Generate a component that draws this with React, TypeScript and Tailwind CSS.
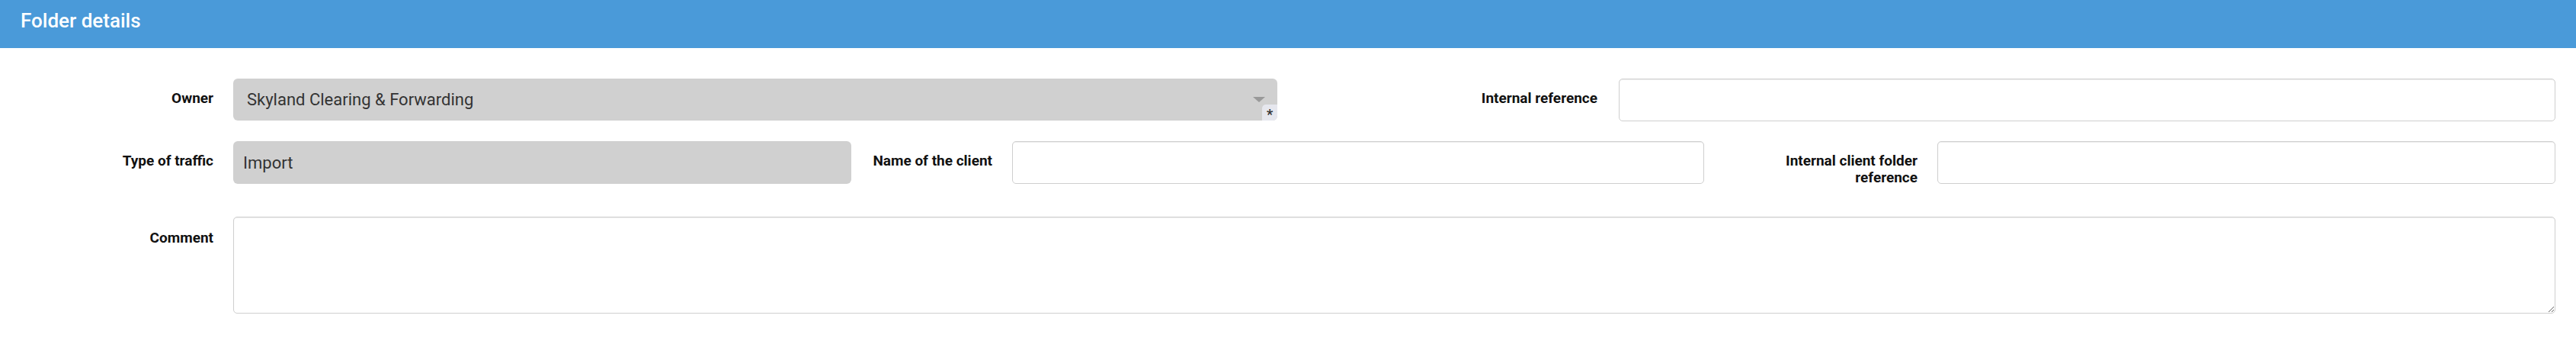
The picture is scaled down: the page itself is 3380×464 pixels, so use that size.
import { useState } from 'react';

const labelCls = 'shrink-0 pt-[15px] text-right text-[19px] font-bold leading-[22px] text-[#111]';
const inputCls =
  'h-[56px] rounded-[5px] border border-[#cfcfcf] bg-white px-4 text-[20px] text-[#333] shadow-[inset_0_1px_1px_rgba(0,0,0,0.075)] outline-none';

function Field({ value, onChange, className }: { value: string; onChange: (v: string) => void; className: string }) {
  return <input value={value} onChange={(e) => onChange(e.target.value)} className={`${inputCls} ${className}`} />;
}

export default function App() {
  const [form, setForm] = useState({
    internalRef: '',
    clientName: '',
    clientFolderRef: '',
    comment: '',
  });

  const set = (key: keyof typeof form) => (v: string) => setForm((f) => ({ ...f, [key]: v }));

  return (
    <div className="min-h-[464px] bg-white font-['Roboto',sans-serif]">
      {/* Header */}
      <div className="flex h-[63px] items-center bg-[#4a9ad9] px-[27px] pb-[8px]">
        <h2 className="text-[26px] font-medium text-white">Folder details</h2>
      </div>

      <div className="flex flex-col pr-[27px] pt-[40px]">
        {/* Row 1 */}
        <div className="flex items-start">
          <label className={`${labelCls} w-[280px]`}>Owner</label>
          <div className="relative ml-[26px] flex h-[55px] w-[1370px] shrink-0 items-center rounded-[6px] bg-[#d0d0d0] pl-[18px]">
            <span className="text-[22px] text-[#333]">Skyland Clearing &amp; Forwarding</span>
            <div className="absolute right-[16px] top-[24px] h-0 w-0 border-x-[8px] border-t-[7px] border-x-transparent border-t-[#999]" />
            <div className="absolute bottom-0 right-0 flex h-[21px] w-[20px] items-center justify-center rounded-tl-[5px] rounded-br-[6px] bg-[#e6e7ee] pt-[4px] text-[18px] font-bold leading-none text-[#333]">
              *
            </div>
          </div>
          <label className={`${labelCls} w-[420px]`}>Internal reference</label>
          <Field value={form.internalRef} onChange={set('internalRef')} className="ml-[28px] min-w-0 flex-1" />
        </div>

        {/* Row 2 */}
        <div className="mt-[26px] flex items-start">
          <label className={`${labelCls} w-[280px]`}>Type of traffic</label>
          <div className="ml-[26px] flex h-[56px] w-[811px] shrink-0 items-center rounded-[6px] bg-[#d0d0d0] pl-[13px]">
            <span className="text-[22px] text-[#333]">Import</span>
          </div>
          <label className={`${labelCls} w-[185px]`}>Name of the client</label>
          <Field value={form.clientName} onChange={set('clientName')} className="ml-[26px] w-[908px] shrink-0" />
          <label className={`${labelCls} w-[280px] pl-[90px]`}>Internal client folder reference</label>
          <Field value={form.clientFolderRef} onChange={set('clientFolderRef')} className="ml-[26px] min-w-0 flex-1" />
        </div>

        {/* Row 3 */}
        <div className="mt-[40px] flex items-start">
          <label className={`${labelCls} w-[280px] pt-[17px]`}>Comment</label>
          <textarea
            value={form.comment}
            onChange={(e) => set('comment')(e.target.value)}
            className="ml-[26px] h-[127px] min-w-0 flex-1 rounded-[5px] border border-[#cfcfcf] bg-white px-4 py-3 text-[20px] text-[#333] shadow-[inset_0_1px_1px_rgba(0,0,0,0.075)] outline-none"
          />
        </div>
      </div>
    </div>
  );
}
